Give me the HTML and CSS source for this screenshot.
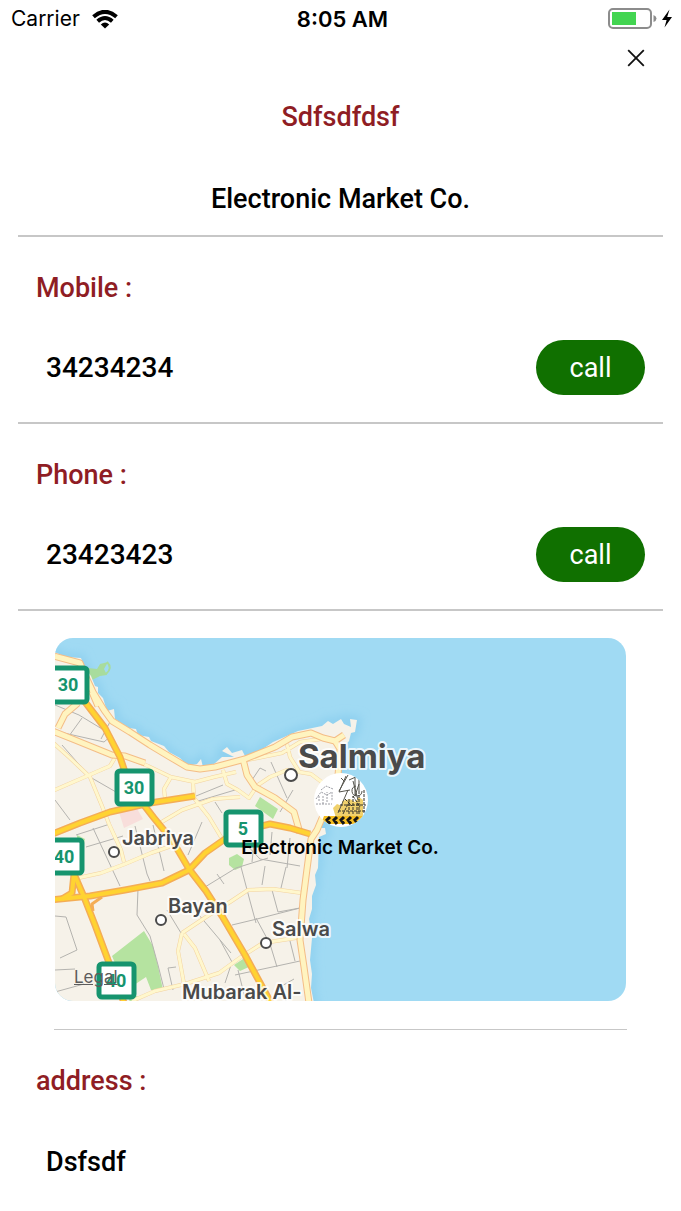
FILE: index.html
```html
<!DOCTYPE html>
<html lang="en">
<head>
<meta charset="utf-8">
<meta name="viewport" content="width=device-width, initial-scale=1">
<title>Electronic Market Co.</title>
<link rel="stylesheet" href="styles.css">
</head>
<body>
<header class="status">
  <div class="status-left">
    <span>Carrier</span>
    <svg class="wifi" viewBox="0 0 26 19" aria-hidden="true">
      <path d="M1.500 6.800Q13-3.200 24.500 6.800M5.700 11.200Q13 4.800 20.300 11.200" fill="none" stroke="#000" stroke-width="4"/>
      <path d="M8.800 14.400Q13 10.800 17.200 14.400L13 18.600z"/>
    </svg>
  </div>
  <span class="status-time">8:05 AM</span>
  <div class="status-right">
    <svg class="battery" viewBox="0 0 66 22" aria-hidden="true">
      <rect x="1" y="1" width="42" height="19" rx="4" fill="#fff" stroke="#8c8c8c" stroke-width="2"/>
      <rect x="4" y="4" width="24" height="13" fill="#43d551"/>
      <path d="M45.500 7q3 1.200 3 3.500t-3 3.500z" fill="#8c8c8c"/>
      <path d="M61.500 1.500L54 12h4.600L56.500 19.500 64 9h-4.800z"/>
    </svg>
  </div>
</header>

<main class="page">
  <div class="toolbar">
    <button class="close" type="button" aria-label="Close">
      <svg viewBox="0 0 18 18" aria-hidden="true"><path d="M1.200 1.200L16.800 16.800M16.800 1.200L1.200 16.800" stroke="#111" stroke-width="1.800" fill="none"/></svg>
    </button>
  </div>
  <h1 class="title">Sdfsdfdsf</h1>
  <p class="company">Electronic Market Co.</p>

  <section class="contact">
    <h2 class="label">Mobile :</h2>
    <div class="row"><span class="value">34234234</span><button class="call" type="button">call</button></div>
  </section>
  <section class="contact">
    <h2 class="label">Phone :</h2>
    <div class="row"><span class="value">23423423</span><button class="call" type="button">call</button></div>
  </section>

  <section class="map-area">
    <div class="map">
      <svg class="map-canvas" viewBox="55 638 571 363" role="img" aria-label="Map of Salmiya">
        <defs>
          <filter id="shore" x="-5%" y="-5%" width="110%" height="110%"><feGaussianBlur stdDeviation="4"/></filter>
          <path id="land" d="M50 650L66 657 81 658 84 666 91 676 95 686 98 687 98 693 103 698 107 711 114 709 115 719 129 728 136 729 138 735 149 737 151 741 164 746 169 752 180 758 188 766 197 764 201 759 203 767 214 764 222 757 234 757 222 751 227 747 232 753 242 750 245 756 251 757 273 742 298 731 322 726 328 721 333 724 341 719 344 724 351 727 350 719 357 720 355 732 351 733 349 741 341 751 342 766 337 777 334 808 330 815 322 819 320 828 325 828 326 834 319 837 318 868 315 875 316 885 312 896 312 909 309 919 312 938 310 960 312 974 311 988 314 1003 50 1003z"/>
          <g id="highways">
            <path d="M50 655L80 663 86 677 93 692 104 710 112 721 130 732 150 745 170 757 187 767 200 769 215 767 245 759 275 747 292 737 311 733 323 738 335 741 344 735"/>
            <path d="M335 741L340 749 338 776 325 811 317 830 311 839 307 869 303 900 300 940 304 967 309 1003"/>
            <path d="M243 759L247 775 255 787 275 798 294 812 300 833"/>
            <path d="M50 730L75 740 112 755 125 756 145 763"/>
            <path d="M58 728L65 714 78 703M92 692L98 706"/>
          </g>
          <g id="streets">
            <path d="M50 740L70 758 90 777 102 806 109 824 121 850 124 862"/>
            <path d="M50 792L87 776 110 766 116 756"/>
            <path d="M124 756L148 766 171 777 195 782 214 777 236 772M171 777L164 789 165 798"/>
            <path d="M193 783L194 798 209 817 221 837M160 823L182 810 213 799 240 797"/>
            <path d="M223 770L227 784 238 790 249 798 255 789M255 787L270 777 287 770 311 774 331 789M287 744L290 757 300 773M247 760L282 753 300 742 321 739"/>
            <path d="M78 878L101 873 125 864 151 853 180 843"/>
            <path d="M182 933L178 951 184 984M184 934L195 948 209 981M182 933L206 917 230 902 248 890 273 889 302 893"/>
            <path d="M132 1001L155 991 185 984 219 973 241 957 263 943 302 937"/>
          </g>
          <g id="freeways">
            <path d="M82 698L105 728 120 757 127 778 140 800 154 818 172 840 189 869 206 891 222 916 245 955 265 992 271 1003"/>
            <path d="M50 835L80 823 110 812 150 803 195 796"/>
            <path d="M50 900L90 896 125 890 162 883 189 870 205 853 225 839 245 830 270 824 290 828 310 834"/>
            <path d="M74 874L84 897 95 925 108 960 118 985 124 1003"/>
            <path d="M74 874L72 893 62 899"/>
          </g>
        </defs>
        <rect x="50" y="633" width="581" height="373" fill="#a0daf3"/>
        <use href="#land" fill="none" stroke="#8ed0ef" stroke-width="8" filter="url(#shore)"/>
        <path d="M88 668L97 669 100 664 108 662 104 669 107 675 100 676 90 681z" fill="#a8dc9d"/>
        <path d="M107 662q6 6-1 12" fill="none" stroke="#a8dc9d" stroke-width="2"/>
        <use href="#land" fill="#f6f2e9"/>
        <path d="M119 812l16-7 8 14-19 9z" fill="#f8dedb"/>
        <g fill="#b5e3a0">
          <path d="M112 956L144 931 153 946 158 966 163 990 151 990 146 977 131 987 117 968z"/>
          <path d="M260 797l18 12-5 10-18-13zM229 858l8-4 7 5-2 8-7 3-6-5zM234 965l12-8 5 9-11 5zM77 835l8 4-2 9-6-3z"/>
          <path d="M125 990l15 8-10 4z"/>
        </g>
        <g fill="none" stroke="#b4b3af" stroke-width="1">
          <path d="M55 705L79 715 112 735 104 742 55 731M82 718L69 736M111 720L101 739M62 745L90 777 116 792M55 800L70 820M76 835L110 824M86 847L123 836M93 828L120 886M135 826L147 874 150 881M153 825L164 871"/>
          <path d="M138 889L137 915 150 936 158 965 164 989M167 910L181 933M199 915L231 953M205 887L236 868 268 858M217 874L224 884M55 916L66 917 77 950 60 958M55 970L75 969M55 992L84 984M176 967L168 968 173 990M231 965L225 983"/>
          <path d="M196 796L223 785M195 802L235 790M215 802L222 813M188 855L202 822M241 839L260 859 300 866M255 833L252 862M272 832L270 855M290 838L287 868M241 867L250 901 256 923M265 866L262 885M286 867L281 888M272 890L278 912 300 908M232 925L257 919 300 908M256 918L270 944 277 967M235 975L277 966 300 961M238 970L245 998M290 941L295 961M294 979L280 987 287 1003M271 762L287 798M252 780L260 768 266 771M280 812L293 790M220 940L232 962"/>
        </g>
        <g fill="none" stroke-linejoin="round">
          <use href="#streets" stroke="#f3d3a0" stroke-width="4"/>
          <use href="#streets" stroke="#fff7cd" stroke-width="3"/>
          <use href="#highways" stroke="#f4bd86" stroke-width="7"/>
          <use href="#highways" stroke="#fff4c0" stroke-width="5"/>
          <use href="#freeways" stroke="#f4ad55" stroke-width="7"/>
          <use href="#freeways" stroke="#ffd331" stroke-width="4"/>
          <path d="M93 911L92 904 102 897" stroke="#f4ad55" stroke-width="3"/>
        </g>
        <g class="shields">
          <g><rect x="50" y="668" width="37" height="34" rx="3"/><text x="68" y="691">30</text></g>
          <g><rect x="117" y="771" width="35" height="33" rx="3"/><text x="134" y="794">30</text></g>
          <g><rect x="226" y="812" width="35" height="33" rx="3"/><text x="243" y="835">5</text></g>
          <g><rect x="50" y="840" width="32" height="33" rx="3"/><text x="64" y="863">40</text></g>
          <g><rect x="99" y="964" width="35" height="33" rx="3"/><text x="116" y="987">40</text></g>
        </g>
        <g class="places">
          <circle cx="291" cy="775" r="6"/><circle cx="114" cy="852" r="5"/><circle cx="161" cy="920" r="5"/><circle cx="266" cy="943" r="5"/>
          <text class="city" x="298" y="768">Salmiya</text>
          <text x="122" y="845">Jabriya</text>
          <text x="168" y="913">Bayan</text>
          <text x="272" y="936">Salwa</text>
          <text x="182" y="999">Mubarak Al-</text>
        </g>
        <clipPath id="pin"><circle cx="341" cy="800" r="27"/></clipPath>
        <g clip-path="url(#pin)">
          <rect x="313" y="772" width="56" height="56" fill="#fff"/>
          <path d="M316 799l5-7 6 3 5-3v9M319 801v-5M323 804v-8M327 802v-10M316 804h16M321 790l5-4 7 3" fill="none" stroke="#9c9da4" stroke-width="1" stroke-dasharray="2 1"/>
          <path d="M333 808l4-4 5 2v-5l8-2 5 3 4-5 4 3v18h-27z" fill="#f0d16c"/>
          <path d="M339 791l9-16M346 776l-7 16 11-2M349 780l9-4 6 7M355 778v18M348 790l-10 23M353 781l5 19M359 784l-4 12M359 779v12M356 786a5 5 0 1 0 6 5M341 778l3 3" fill="none" stroke="#55544c" stroke-width="1"/>
          <path d="M359 791v23M364 790v24M343 814l6-12M349 814v-15M353 814v-18M357 814v-13M340 805h26M338 811h29M345 799l7 7M353 796l7 11" fill="none" stroke="#34332a" stroke-width="1" stroke-dasharray="3 1"/>
          <path d="M324 816H366V824H321z" fill="#f4bd21"/>
          <path d="M330 817l-3 3 3 4M337 817l-3 3 3 4M344 817l-3 3 3 4M351 817l-3 3 3 4M358 817l-3 3 3 4" fill="none" stroke="#161616" stroke-width="3"/>
        </g>
        <text class="pin-label" x="340" y="854">Electronic Market Co.</text>
      </svg>
      <a class="legal" href="#legal">Legal</a>
    </div>
  </section>

  <section class="address">
    <h2 class="label">address :</h2>
    <p class="value">Dsfsdf</p>
  </section>
</main>
</body>
</html>
```
FILE: styles.css
```css
* { box-sizing: border-box; }
body {
  margin: 0;
  background: #fff;
  color: #000;
  font-family: Roboto, "Liberation Sans", sans-serif;
  font-size: 27px;
  line-height: 40px;
}
h1, h2, p { margin: 0; font: inherit; font-weight: 500; }
button { border: 0; padding: 0; font: inherit; cursor: pointer; }
svg { display: block; }

.status {
  display: grid;
  grid-template-columns: 1fr auto 1fr;
  align-items: center;
  height: 38px;
  padding: 0 7px 0 11px;
  font-family: Inter, "Liberation Sans", sans-serif;
  font-size: 21px;
  line-height: 26px;
}
.status-left { display: flex; align-items: center; gap: 12px; }
.status-right { display: flex; justify-content: flex-end; }
.status-time { font-size: 22px; font-weight: 600; }
.wifi { width: 26px; height: 19px; }
.battery { width: 66px; height: 22px; }

.page { padding: 0 18px; }
.toolbar { display: flex; justify-content: flex-end; padding-right: 7px; }
.close {
  display: grid;
  place-items: center;
  width: 40px;
  height: 40px;
  background: none;
}
.close svg { width: 18px; height: 18px; }
.title, .company { text-align: center; }
.title { margin: 19px 0 42px; color: #8f1d24; }
.company { padding-bottom: 16px; border-bottom: 2px solid #c7c7c7; box-sizing: content-box; }

.contact { padding: 31px 18px 27px; border-bottom: 2px solid #c7c7c7; }
.label { color: #8f1d24; }
.row {
  display: flex;
  align-items: center;
  justify-content: space-between;
  margin-top: 32px;
  padding-left: 10px;
}
.row .value { font-size: 28px; font-weight: 500; }
.call {
  width: 109px;
  height: 55px;
  border-radius: 28px;
  background: #107000;
  color: #fff;
}

.map-area {
  margin: 0 36px;
  padding: 27px 0 28px;
  border-bottom: 1px solid #c7c7c7;
}
.map { position: relative; overflow: hidden; margin: 0 1px; border-radius: 18px; }
.map-canvas { width: 100%; height: auto; font-family: Inter, "Liberation Sans", sans-serif; }
.shields rect { fill: #fff; stroke: #16946e; stroke-width: 5px; }
.shields text {
  fill: #16946e;
  font-family: Roboto, "Liberation Sans", sans-serif;
  font-size: 18px;
  font-weight: 700;
  text-anchor: middle;
}
.places circle { fill: #fff; stroke: #4a4a4a; stroke-width: 2px; }
.places text {
  fill: #4a4a4a;
  stroke: #fff;
  stroke-opacity: 0.8;
  stroke-width: 4px;
  stroke-linejoin: round;
  paint-order: stroke;
  font-size: 20px;
  font-weight: 600;
}
.places .city { font-size: 33px; font-weight: 700; }
.pin-label { font-size: 19px; font-weight: 600; text-anchor: middle; }
.legal {
  position: absolute;
  left: 19px;
  bottom: 14px;
  color: #5c5c5c;
  font-family: Inter, "Liberation Sans", sans-serif;
  font-size: 17px;
  line-height: 20px;
}

.address { padding: 31px 18px 28px; }
.address .value { margin-top: 41px; padding-left: 10px; }
```
